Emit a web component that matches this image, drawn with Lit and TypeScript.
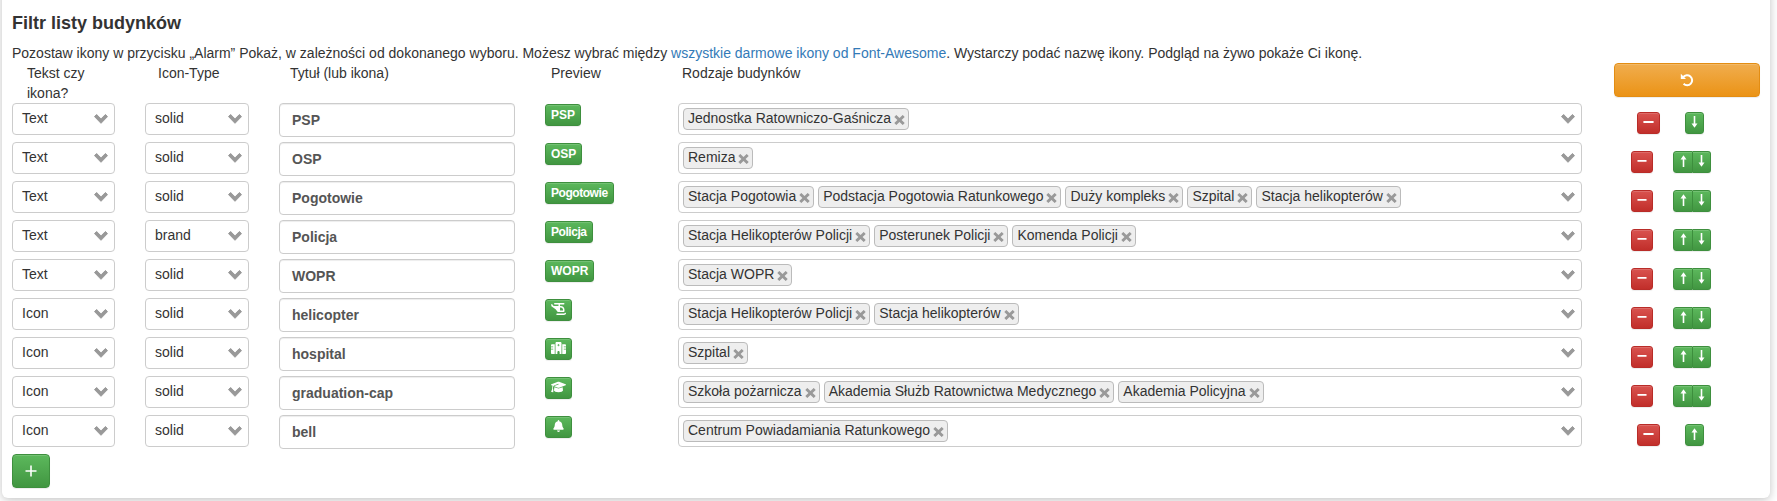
import { LitElement, html, svg, css } from "lit";
import { customElement } from "lit/decorators.js";

interface Row {
  kind: string;
  type: string;
  title: string;
  icon?: string;
  buildings: string[];
}

const ROWS: Row[] = [
  { kind: "Text", type: "solid", title: "PSP", buildings: ["Jednostka Ratowniczo-Gaśnicza"] },
  { kind: "Text", type: "solid", title: "OSP", buildings: ["Remiza"] },
  { kind: "Text", type: "solid", title: "Pogotowie", buildings: ["Stacja Pogotowia", "Podstacja Pogotowia Ratunkowego", "Duży kompleks", "Szpital", "Stacja helikopterów"] },
  { kind: "Text", type: "brand", title: "Policja", buildings: ["Stacja Helikopterów Policji", "Posterunek Policji", "Komenda Policji"] },
  { kind: "Text", type: "solid", title: "WOPR", buildings: ["Stacja WOPR"] },
  { kind: "Icon", type: "solid", title: "helicopter", icon: "helicopter", buildings: ["Stacja Helikopterów Policji", "Stacja helikopterów"] },
  { kind: "Icon", type: "solid", title: "hospital", icon: "hospital", buildings: ["Szpital"] },
  { kind: "Icon", type: "solid", title: "graduation-cap", icon: "cap", buildings: ["Szkoła pożarnicza", "Akademia Służb Ratownictwa Medycznego", "Akademia Policyjna"] },
  { kind: "Icon", type: "solid", title: "bell", icon: "bell", buildings: ["Centrum Powiadamiania Ratunkowego"] },
];

const glyphs: Record<string, unknown> = {
  helicopter: svg`<svg width="15" height="12" viewBox="0 0 640 512" fill="currentColor"><path fill-rule="evenodd" d="M128 32c0-18 14-32 32-32h384c18 0 32 14 32 32s-14 32-32 32H384v64h32c88 0 160 72 160 160v64c0 18-14 32-32 32H320c-20 0-39-9-51-26l-71-94c-4-6-10-10-16-13L46 165c-8-3-15-10-18-18L1 76C-2 66 6 56 16 56h32c5 0 10 2 13 6l51 66h208V64H160c-18 0-32-14-32-32zm256 288h128v-32c0-53-43-96-96-96h-32v128zm247 105c12 13 12 33 0 46l-7 7c-22 22-51 34-81 34H256c-18 0-32-14-32-32s14-32 32-32h287c13 0 25-5 34-14l8-9c12-12 33-12 46 0z"/></svg>`,
  hospital: svg`<svg width="15" height="12" viewBox="0 0 640 512" fill="currentColor"><path fill-rule="evenodd" d="M192 48c0-27 22-48 48-48h160c27 0 48 21 48 48v464h-80v-80c0-27-22-48-48-48s-48 21-48 48v80h-80V48zM48 96h112v416H48c-27 0-48-22-48-48V320h80c9 0 16-7 16-16s-7-16-16-16H0v-64h80c9 0 16-7 16-16s-7-16-16-16H0v-48c0-27 21-48 48-48zm432 0h112c27 0 48 21 48 48v48h-80c-9 0-16 7-16 16s7 16 16 16h80v64h-80c-9 0-16 7-16 16s7 16 16 16h80v144c0 26-21 48-48 48H480V96zM304 80v32h-32v32h32v32h32v-32h32v-32h-32V80h-32z"/></svg>`,
  cap: svg`<svg width="15" height="12" viewBox="0 0 640 512" fill="currentColor"><path d="M320 32c-8 0-16 1-24 4L16 137c-10 4-16 13-16 23s6 19 16 23l58 21c-17 26-26 56-26 88v28c0 28-11 58-22 81-7 13-14 25-23 37-3 4-4 10-2 15s6 9 11 10l64 16c4 1 9 0 13-2s6-6 7-10c9-43 5-82-2-109-3-14-8-29-14-42v-24c0-30 10-58 28-81 12-15 29-28 48-35l157-62 12 30-157 61c-13 5-24 13-32 23l160 57c8 3 16 4 24 4s16-1 24-4l280-101c9-4 16-13 16-23s-7-19-16-23L344 36c-8-3-16-4-24-4zM128 408c0 35 86 72 192 72s192-37 192-72l-15-146-142 52a104 104 0 0 1-70 0l-142-52-15 146z"/></svg>`,
  bell: svg`<svg class="bell" width="11" height="12" viewBox="0 0 448 512" fill="currentColor"><path d="M224 0c-18 0-32 14-32 32v19C119 66 64 131 64 208v19c0 47-17 92-48 127l-8 9c-8 9-10 23-5 34s17 19 29 19h384c12 0 24-7 29-19s3-25-5-34l-8-9c-31-35-48-80-48-127v-19c0-77-55-142-128-157V32c0-18-14-32-32-32zm45 493c12-12 19-28 19-45H160c0 17 7 33 19 45s28 19 45 19 33-7 45-19z"/></svg>`,
};

const chevron = html`<svg class="chevron" width="14" height="10" viewBox="0 0 14 10"><path d="M0.5 2.6 2.6 0.5 7 4.9 11.4 0.5 13.5 2.6 7 9.3Z" fill="#999" stroke="#999" stroke-linejoin="round"/></svg>`;
const cross = html`<svg class="cross" width="11" height="10" viewBox="0 0 11 10"><path d="M1.3 1 9.7 9M9.7 1 1.3 9" fill="none" stroke="#999" stroke-width="2.9"/></svg>`;
const minus = html`<svg class="minus" width="11" height="12" viewBox="0 0 11 12"><rect x="0.4" y="4.9" width="10.2" height="2" rx="0.5" fill="#fff"/></svg>`;
const arrowUp = html`<svg width="7" height="12" viewBox="0 0 7 12"><path d="M3.5 2V12" stroke="#fff" stroke-width="1.6"/><path d="M0.5 4.4 3.5 0.2 6.5 4.4Z" fill="#fff"/></svg>`;
const arrowDown = html`<svg width="7" height="12" viewBox="0 0 7 12"><path d="M3.5 0V10" stroke="#fff" stroke-width="1.6"/><path d="M0.5 7.6 3.5 11.8 6.5 7.6Z" fill="#fff"/></svg>`;

@customElement("app-root")
export class AppRoot extends LitElement {
  static styles = css`
    :host {
      display: block;
      height: 501px;
      overflow: hidden;
      background: #fff;
      font: 14px/20px "Liberation Sans", Arial, sans-serif;
      color: #333;
    }
    * { box-sizing: border-box; }
    svg { display: block; flex: none; }
    .panel {
      width: 1768px;
      height: 518px;
      margin: -20px 0 0 2px;
      padding: 30px 10px 10px;
      border-radius: 6px;
      background: #fff;
      box-shadow: 0 2px 10px rgba(0, 0, 0, 0.24);
    }
    h4 { margin: 0; font-size: 18px; line-height: 26px; font-weight: 700; }
    p { margin: 7px 0 0; white-space: nowrap; }
    a { color: #337ab7; text-decoration: none; }
    .grid-row {
      display: grid;
      grid-template-columns: 133px 134px 266px 133px 936px 146px;
      height: 39px;
      align-items: start;
    }
    .head { height: 40px; }
    .head > span { padding: 0 30px 0 15px; }
    .head > .title { padding-left: 11px; }
    .head > .prev { padding-left: 6px; }
    .head > .kinds { padding-left: 4px; }
    .head > .type { padding-left: 13px; }
    .select, .multi {
      display: flex;
      align-items: center;
      height: 32px;
      border: 1px solid #ccc;
      border-radius: 4px;
      background: #fff;
    }
    .select { width: 103px; padding: 0 6px 2px 9px; justify-content: space-between; }
    .select.wide { width: 104px; }
    .chevron { margin-top: 2px; }
    .multi { width: 904px; padding: 0 6px 0 4px; gap: 4px; }
    .multi .chevron { margin: 0 0 0 auto; }
    .tag {
      display: flex;
      align-items: center;
      height: 22px;
      padding: 0 3px 0 4px;
      gap: 3px;
      border: 1px solid #bbb;
      border-radius: 4px;
      background: #eee;
      white-space: nowrap;
    }
    .tag span { line-height: 18px; padding-bottom: 2px; }
    .tag .cross { margin-top: 1px; }
    .input {
      width: 236px;
      height: 34px;
      padding: 6px 12px;
      border: 1px solid #ccc;
      border-radius: 4px;
      box-shadow: inset 0 1px 1px rgba(0, 0, 0, 0.075);
      font-weight: 700;
      color: #555;
    }
    .btn {
      display: inline-flex;
      justify-content: center;
      align-items: center;
      height: 22px;
      border: 1px solid #3e8f3e;
      border-radius: 3px;
      color: #fff;
      background: linear-gradient(#5cb85c, #419641);
      box-shadow: inset 0 1px 0 rgba(255, 255, 255, 0.15), 0 1px 1px rgba(0, 0, 0, 0.075);
    }
    .preview { margin-top: 1px; padding: 0 5px; font-size: 12px; font-weight: 700; line-height: 18px; }
    .preview.glyph { padding-bottom: 2px; }
    .preview.word { letter-spacing: -0.45px; }
    .preview .bell { margin: 0 2px; }
    .actions { display: flex; padding: 9px 0 0 17px; gap: 20px; }
    .actions.single { padding-left: 23px; gap: 25px; }
    .red { width: 22px; border-color: #b92c28; background: linear-gradient(#d9534f, #c12e2a); padding-bottom: 2px; }
    .single .red { width: 23px; }
    .minus { width: 10px; }
    .single .minus { width: 11px; }
    .group { display: flex; }
    .group .btn { width: 19px; padding-bottom: 2px; }
    .group .btn + .btn { width: 18px; border-radius: 0 3px 3px 0; border-left-width: 0; }
    .group .btn:not(:last-child) { width: 20px; border-radius: 3px 0 0 3px; }
    .reset {
      height: 34px;
      border-color: #e38d13;
      border-radius: 4px;
      background: linear-gradient(#f0ad4e, #eb9316);
    }
    .add { width: 38px; height: 34px; border-radius: 4px; }
  `;

  private row(r: Row, i: number) {
    const first = i === 0;
    const last = i === ROWS.length - 1;
    const look = r.icon ? "glyph" : r.title !== r.title.toUpperCase() ? "word" : "";
    return html`
      <div class="grid-row">
        <div class="select"><span>${r.kind}</span>${chevron}</div>
        <div class="select wide"><span>${r.type}</span>${chevron}</div>
        <div class="input">${r.title}</div>
        <div><div class="btn preview ${look}">${r.icon ? glyphs[r.icon] : r.title}</div></div>
        <div class="multi">
          ${r.buildings.map((b) => html`<div class="tag"><span>${b}</span>${cross}</div>`)}${chevron}
        </div>
        <div class="actions ${first || last ? "single" : ""}">
          <div class="btn red">${minus}</div>
          <div class="group">
            ${first ? null : html`<div class="btn">${arrowUp}</div>`}
            ${last ? null : html`<div class="btn">${arrowDown}</div>`}
          </div>
        </div>
      </div>
    `;
  }

  render() {
    return html`
      <div class="panel">
        <h4>Filtr listy budynków</h4>
        <p>Pozostaw ikony w przycisku „Alarm” Pokaż, w zależności od dokonanego wyboru. Możesz wybrać między <a>wszystkie darmowe ikony od Font-Awesome</a>. Wystarczy podać nazwę ikony. Podgląd na żywo pokaże Ci ikonę.</p>
        <div class="grid-row head">
          <span>Tekst czy ikona?</span>
          <span class="type">Icon-Type</span>
          <span class="title">Tytuł (lub ikona)</span>
          <span class="prev">Preview</span>
          <span class="kinds">Rodzaje budynków</span>
          <div class="btn reset">
            <svg width="14" height="14" viewBox="0 0 14 14"><path d="M3.2 4.2A5 5 0 1 1 3.6 10.8" fill="none" stroke="#fff" stroke-width="2"/><path d="M0.8 0.8V6H6Z" fill="#fff"/></svg>
          </div>
        </div>
        ${ROWS.map((r, i) => this.row(r, i))}
        <div class="btn add"><svg width="12" height="12" viewBox="0 0 12 12"><path d="M6 0.5V11.5M0.5 6H11.5" stroke="#fff" stroke-width="1.6"/></svg></div>
      </div>
    `;
  }
}
